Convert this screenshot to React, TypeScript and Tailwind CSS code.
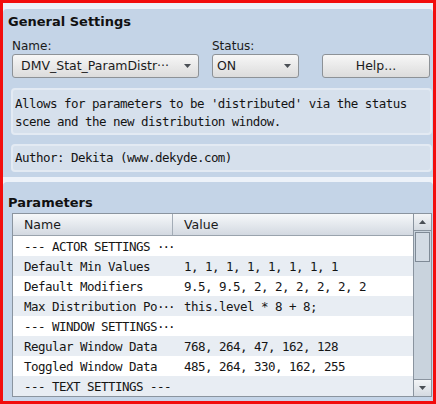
type Param = { name: string; cut?: boolean; value: string };

const PARAMS: Param[] = [
  { name: '--- ACTOR SETTINGS ', cut: true, value: '' },
  { name: 'Default Min Values', value: '1, 1, 1, 1, 1, 1, 1, 1' },
  { name: 'Default Modifiers', value: '9.5, 9.5, 2, 2, 2, 2, 2, 2' },
  { name: 'Max Distribution Po', cut: true, value: 'this.level * 8 + 8;' },
  { name: '--- WINDOW SETTINGS', cut: true, value: '' },
  { name: 'Regular Window Data', value: '768, 264, 47, 162, 128' },
  { name: 'Toggled Window Data', value: '485, 264, 330, 162, 255' },
  { name: '--- TEXT SETTINGS ---', value: '' },
];

const sans = "font-['DejaVu_Sans',sans-serif]";
const mono = "font-['DejaVu_Sans_Mono',monospace]";

function Arrow({ up }: { up?: boolean }) {
  return (
    <svg width="7" height="4" viewBox="0 0 7 4">
      <path d={up ? 'M0 4h7L3.5 0z' : 'M0 0h7L3.5 4z'} fill="#4a4f55" />
    </svg>
  );
}

function Dropdown({ text, className }: { text: React.ReactNode; className: string }) {
  return (
    <div className={`h-6 flex items-center justify-between pr-[7px] rounded-[3px] border border-[#8d9297] bg-linear-to-b from-[#f7f7f7] to-[#dcdcdc] text-[12.5px] text-[#1c1c1c] ${className}`}>
      <span>{text}</span>
      <Arrow />
    </div>
  );
}

function InfoBox({ children, className }: { children: React.ReactNode; className: string }) {
  return (
    <div className={`rounded-[4px] border-2 border-[#e3eaf3] bg-[#d6e0ec] px-[2px] ${mono} text-[12.5px] tracking-[-0.53px] text-[#141414] ${className}`}>
      {children}
    </div>
  );
}

export default function App() {
  return (
    <div className={`w-[436px] h-[404px] border-[3px] border-[#f20d0d] bg-[#edf2f9] pt-[6px] flex flex-col overflow-hidden ${sans}`}>
      {/* general settings */}
      <div className="h-[171px] bg-[#c4d4e7] rounded-t-[4px] pl-[5px] pr-[1px] pt-[5px]">
        <div className="text-[13px] leading-4 font-bold text-[#111]">General Settings</div>
        <div className="flex mt-[9px] text-[12px] leading-[14px] text-[#1a1a1a]">
          <div className="ml-[4px] w-[200px]">
            <div className="mb-[1px]">Name:</div>
            <Dropdown className="w-[187px] pl-[8px]" text="DMV_Stat_ParamDistr···" />
          </div>
          <div>
            <div className="mb-[1px]">Status:</div>
            <Dropdown className="w-[87px] pl-[4px]" text="ON" />
          </div>
          <div className="ml-[23px] pt-[15px]">
            <button className="w-[108px] h-6 rounded-[3px] border border-[#8d9297] bg-linear-to-b from-[#f7f7f7] to-[#dcdcdc] text-[12.5px] text-[#1c1c1c]">
              Help...
            </button>
          </div>
        </div>
        <InfoBox className="mt-[10px] ml-[3px] h-[47px] pt-[5px] leading-[18px]">
          Allows for parameters to be 'distributed' via the status scene and the new distribution window.
        </InfoBox>
        <InfoBox className="mt-[9px] ml-[3px] h-[28px] flex items-center">
          Author: Dekita (www.dekyde.com)
        </InfoBox>
      </div>

      {/* parameters */}
      <div className="mt-[5px] flex-1 bg-[#c4d4e7] rounded-t-[4px] pl-[5px] pr-[1px] pt-[13px] pb-[4px] flex flex-col">
        <div className="text-[13px] leading-4 font-bold text-[#111]">Parameters</div>
        <div className="mt-[2px] ml-[4px] flex-1 flex border border-[#8a949f] bg-white overflow-hidden">
          <div className="flex-1 flex flex-col">
            <div className="h-[22px] shrink-0 flex border-b border-[#9aa3ad] bg-linear-to-b from-[#f6f8fa] to-[#d3d9e1] text-[12.5px] text-[#1a1a1a]">
              <div className="w-[160px] pl-[11px] pt-[2px] flex items-center border-r border-[#a3acb6]">Name</div>
              <div className="pl-[11px] pt-[2px] flex items-center">Value</div>
            </div>
            <div className={`${mono} text-[12.5px] tracking-[-0.53px] text-[#151515]`}>
              {PARAMS.map((p, i) => (
                <div key={p.name} className={`h-5 pt-[3px] flex items-center ${i % 2 ? 'bg-[#e8edf3]' : 'bg-white'}`}>
                  <div className="w-[160px] pl-[11px] whitespace-pre">
                    {p.name}
                    {p.cut && <span className="tracking-[-2px]">···</span>}
                  </div>
                  <div className="pl-[11px] whitespace-pre">{p.value}</div>
                </div>
              ))}
            </div>
          </div>
          {/* scrollbar */}
          <div className="w-[18px] shrink-0 flex flex-col border-l border-[#8a949f] bg-[#c9d3dd]">
            <div className="h-[17px] flex items-center justify-center border-b border-[#8a949f] bg-linear-to-b from-[#f3f5f7] to-[#d4dae1]">
              <Arrow up />
            </div>
            <div className="flex-1 px-[1px] pt-[1px]">
              <div className="h-[30px] border border-[#7f8a96] bg-[#d3dbe4]" />
            </div>
            <div className="h-[17px] flex items-center justify-center border-t border-[#8a949f] bg-linear-to-b from-[#f3f5f7] to-[#d4dae1]">
              <Arrow />
            </div>
          </div>
        </div>
      </div>
    </div>
  );
}
